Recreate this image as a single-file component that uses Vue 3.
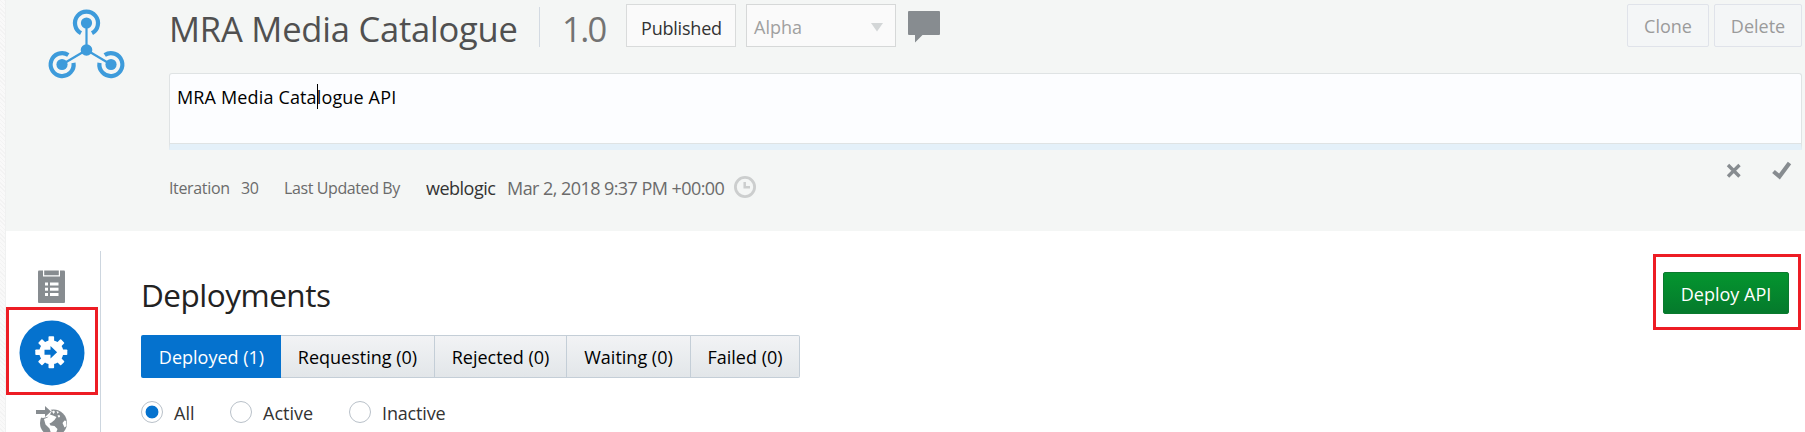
<script setup>
import { ref } from 'vue'

const tabs = [
  { label: 'Deployed (1)', cls: 'w-deployed' },
  { label: 'Requesting (0)', cls: 'w-requesting' },
  { label: 'Rejected (0)', cls: 'w-rejected' },
  { label: 'Waiting (0)', cls: 'w-waiting' },
  { label: 'Failed (0)', cls: 'w-failed' },
]
const activeTab = ref(0)
const filters = [
  { label: 'All', cls: 'f-all' },
  { label: 'Active', cls: 'f-active' },
  { label: 'Inactive', cls: 'f-inactive' },
]
const activeFilter = ref(0)
</script>

<template>
  <div class="page">
    <div class="gutter"></div>
    <div class="main">
      <header class="header">
        <div class="logo">
          <svg width="80" height="76" viewBox="46 6 80 76" fill="none" stroke="#3d9bdb">
            <g stroke-width="2.2">
              <path d="M86.5 50V23M86.5 50L62 64.5M86.5 50L111 64.5" />
            </g>
            <g stroke-width="4.2">
              <path d="M81 33.2A11.5 11.5 0 1 1 92 33.2" />
              <path d="M68.3 54.9A11.5 11.5 0 1 0 73.5 62.8" />
              <path d="M104.7 54.9A11.5 11.5 0 1 1 99.5 62.8" />
            </g>
            <g fill="#3d9bdb" stroke="none">
              <circle cx="86.5" cy="23" r="5.6" />
              <circle cx="86.5" cy="50" r="5.8" />
              <circle cx="62" cy="64.5" r="5.6" />
              <circle cx="111" cy="64.5" r="5.6" />
            </g>
          </svg>
        </div>
        <div class="content">
          <div class="titlebar">
            <h1 class="title">MRA Media Catalogue</h1>
            <span class="version">1.0</span>
            <span class="status"><span>Published</span></span>
            <span class="select"><span>Alpha</span>
              <svg width="12" height="9"><path d="M0 0H12L6 8.5Z" fill="#d3d6d7" /></svg>
            </span>
            <svg class="comment" width="32" height="32"><path d="M1 0H31Q32 0 32 1V23Q32 24 31 24H14.5L7 31.5V24H1Q0 24 0 23V1Q0 0 1 0Z" fill="#878c90" /></svg>
            <span class="spacer"></span>
            <button class="btn clone"><span>Clone</span></button>
            <button class="btn delete"><span>Delete</span></button>
          </div>
          <div class="desc"><span class="desc-a">MRA Media Cata</span><i class="caret"></i><span class="desc-b">logue API</span></div>
          <div class="meta">
            <span class="m-iter">Iteration</span>
            <span class="m-num">30</span>
            <span class="m-upd">Last Updated By</span>
            <span class="m-user">weblogic</span>
            <span class="m-date">Mar 2, 2018 9:37 PM +00:00</span>
            <svg class="clock" width="22" height="22" fill="none" stroke="#cccece"><circle cx="11" cy="11" r="9.6" stroke-width="2.8" /><path d="M10.7 6V11.3H16" stroke-width="2.5" /></svg>
            <span class="spacer"></span>
            <svg class="act-x" width="16" height="16"><path d="M2 2L13.5 13.5M13.5 2L2 13.5" stroke="#878c90" stroke-width="3.4" /></svg>
            <svg class="act-ok" width="20" height="19"><path d="M1.5 10.5L7.5 15.5L17.5 2" fill="none" stroke="#878c90" stroke-width="4.2" /></svg>
          </div>
        </div>
      </header>

      <div class="body">
        <nav class="rail">
          <svg class="clip" width="27" height="33">
            <rect x="0" y="0.5" width="27" height="32.5" rx="1" fill="#878c90" />
            <path d="M5 0V6.5H22V0H20.8V5.2H6.2V0Z" fill="#fff" />
            <g fill="#fff">
              <rect x="7" y="12.5" width="3" height="3" /><rect x="12" y="12.5" width="8.5" height="3" />
              <rect x="7" y="17.7" width="3" height="3" /><rect x="12" y="17.7" width="8.5" height="3" />
              <rect x="7" y="23" width="3" height="3" /><rect x="12" y="23" width="8.5" height="3" />
            </g>
          </svg>
          <div class="mark rail-mark">
            <svg width="66" height="66" viewBox="-33 -33 66 66">
              <circle r="32.5" fill="#0572ce" />
              <g transform="translate(-0.7 -0.7)">
                <g fill="#fff">
                  <circle r="12" />
                  <rect v-for="n in 8" :key="n" x="-2.8" y="-16" width="5.6" height="9" rx="0.8" :transform="`rotate(${n * 45})`" />
                </g>
                <path d="M-6.8 -2.5H-0.8V-6.2L5.8 0L-0.8 6.2V2.5H-6.8Z" fill="#0572ce" />
              </g>
            </svg>
          </div>
          <svg class="globe" width="32" height="27" viewBox="0 0 32 27">
            <circle cx="17.5" cy="17" r="13.5" fill="#878c90" />
            <path d="M3 1H12.5L15.8 5L13 10.5L7 12L3 11Z" fill="#fff" />
            <path d="M0 4H9V0L15 5.6L9 11V8H0Z" fill="#878c90" />
            <path d="M8 13L11.5 11.5L14 8.5L17 9.5L20.5 11L18.5 14L15.5 16.5L13.5 17.5L14.5 19.5L18.5 20L21.5 23L20 27H15L13.5 22.5L9.5 18.5Z" fill="#fff" />
            <path d="M16 5.5L18 4.5L19 6L17.5 8ZM20.5 5L23 6L21.5 7.8ZM21.5 9.5L23.5 9L24 11L22.5 11.5ZM26.5 17L28.5 14.5L30.2 15L30.5 20L28.5 21.5Z" fill="#fff" />
          </svg>
        </nav>
        <section class="deploy">
          <h2 class="heading">Deployments</h2>
          <div class="tabs">
            <button v-for="(t, i) in tabs" :key="t.label" class="tab" :class="[t.cls, { on: i === activeTab }]" @click="activeTab = i"><span>{{ t.label }}</span></button>
          </div>
          <div class="filters">
            <label v-for="(f, i) in filters" :key="f.label" class="filter" :class="[f.cls, { on: i === activeFilter }]" @click="activeFilter = i">
              <i class="radio"></i><span>{{ f.label }}</span>
            </label>
          </div>
        </section>
        <div class="mark deploy-mark"><button class="deploy-btn"><span>Deploy API</span></button></div>
      </div>
    </div>
  </div>
</template>

<style>
body { margin: 0; overflow: hidden; }
</style>

<style scoped>
* { box-sizing: border-box; }
.page {
  display: flex; width: 1805px; height: 432px; overflow: hidden; background: #fff;
  font-family: "Open Sans", "Noto Sans", sans-serif; font-size: 18px; line-height: 24px; color: #333; white-space: nowrap;
}
button { font: inherit; padding: 0; margin: 0; }
svg { display: block; flex: none; }
.gutter { width: 6px; flex: none; border-right: 1px solid #f0f1f1; background: repeating-linear-gradient(45deg, #f9f9f9 0 2px, #f3f3f3 2px 3px); }
.main { flex: 1; min-width: 0; }
.header { display: flex; height: 231px; background: #f4f6f5; }
.logo { width: 163px; padding: 6px 0 0 40px; flex: none; }
.content { width: 1633px; }
.titlebar { display: flex; height: 73px; padding-top: 4px; align-items: flex-start; }
.title { margin: 3px 0 0; width: 371px; height: 40px; border-right: 1px solid #d3dae2; font-weight: 400; font-size: 34.5px; line-height: 44px; letter-spacing: -0.2px; color: #505050; }
.version { width: 86px; padding-left: 22px; margin-top: 3px; font-size: 34.5px; line-height: 44px; letter-spacing: -1.6px; color: #737373; }
.status { width: 110px; height: 43px; border: 1px solid #d9dbdb; background: #fafafa; line-height: 46px; padding-left: 14px; letter-spacing: -0.2px; color: #333; }
.select { display: flex; width: 150px; height: 43px; margin-left: 10px; border: 1px solid #d6d8d8; background: #fafafa; line-height: 44px; padding: 0 12px 0 7px; justify-content: space-between; color: #a0a0a0; }
.select svg { margin-top: 18px; }
.comment { margin: 7px 0 0 12px; }
.spacer { flex: 1; }
.btn { height: 43px; border: 1px solid #e0e3ea; border-radius: 2px; background: #f4f6f7; color: #9b9b9b; line-height: 40px; }
.clone { width: 82px; }
.delete { width: 88px; margin-left: 5px; }
.desc { display: flex; height: 77px; border: 1px solid #dfe3e4; border-bottom: 6px solid #e4f0f9; border-radius: 3px 3px 0 0; background: #fcfdff; box-shadow: inset 0 -1px #dfe3e4; padding: 10px 0 0 7px; line-height: 26px; letter-spacing: 0.15px; color: #000; }
.caret { width: 1px; height: 25px; margin-right: -1px; background: #000; }
.meta { display: flex; height: 48px; padding-top: 26px; line-height: 24px; color: #6b6b6b; }
.m-iter { width: 72px; font-size: 16px; line-height: 25px; letter-spacing: -0.35px; }
.m-num { width: 43px; font-size: 16px; line-height: 25px; letter-spacing: -0.4px; }
.m-upd { width: 142px; font-size: 16px; line-height: 25px; letter-spacing: -0.4px; }
.m-user { width: 81px; letter-spacing: -0.5px; color: #333; }
.m-date { width: 227px; letter-spacing: -0.56px; }
.act-x { margin: -13px 30px 0 0; }
.act-ok { margin: -15px 10px 0 0; }
.body { display: flex; height: 201px; }
.rail { width: 95px; margin-top: 20px; border-right: 1px solid #cdd6df; }
.clip { margin: 19px 0 0 32px; }
.mark { border: 3px solid #ed1c24; }
.rail-mark { width: 92px; height: 88px; margin-top: 4px; padding: 9.5px 0 0 9.5px; }
.globe { margin: 11px 0 0 30px; }
.deploy { padding-left: 40px; width: 1552px; }
.heading { margin: 42px 0 0; height: 62px; font-weight: 400; font-size: 31.5px; line-height: 44px; letter-spacing: -0.5px; color: #222; }
.tabs { display: flex; height: 43px; }
.tab { height: 43px; border: 1px solid #c4ced7; border-left-width: 0; background: linear-gradient(#f2f3f5, #e2e6e9); color: #000; line-height: 43px; }
.tab.on { border: 0; padding: 1px 0 0 1px; background: #0572ce; color: #fff; border-radius: 2px 0 0 2px; }
.tab:last-child { border-radius: 0 2px 2px 0; }
.w-deployed { width: 140px; }
.w-requesting { width: 154px; }
.w-rejected { width: 132px; }
.w-waiting { width: 124px; }
.w-failed { width: 109px; }
.filters { display: flex; padding-top: 23px; }
.filter { display: flex; line-height: 25px; color: #333; }
.f-all { width: 89px; }
.f-active { width: 119px; }
.f-inactive { letter-spacing: -0.15px; }
.radio { width: 22px; height: 22px; margin-right: 11px; border: 1.5px solid #b9c1c9; border-radius: 50%; background: #fff; }
.on .radio { background: radial-gradient(circle, #0572ce 6px, #fff 6.8px); }
.deploy-mark { width: 148px; height: 76px; margin-top: 23px; padding: 15px 0 0 7px; flex: none; }
.deploy-btn { width: 126px; height: 42px; border: 1px solid #0a7a2e; border-radius: 2px; background: linear-gradient(#04952f, #057a2c); color: #fff; line-height: 42px; }
</style>
